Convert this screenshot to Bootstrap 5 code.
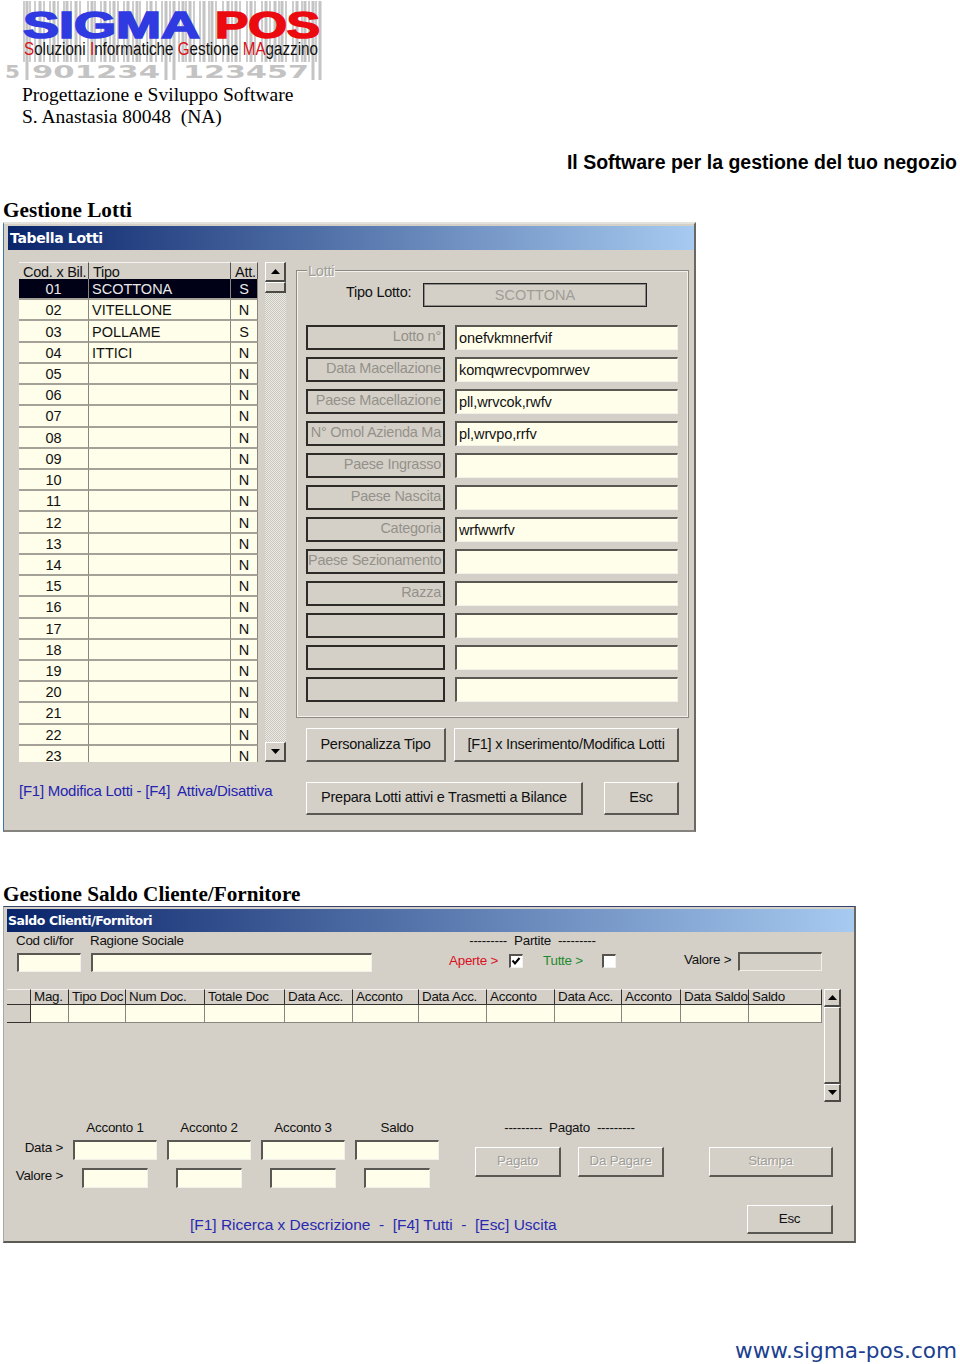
<!DOCTYPE html>
<html lang="it">
<head>
    <meta charset="UTF-8">
    <title>Sigma POS - Gestione Lotti</title>
    <link href="https://cdn.jsdelivr.net/npm/bootstrap@5.3.0/dist/css/bootstrap.min.css" rel="stylesheet">
    <style>
        /* Page */
        body {
            margin: 0;
            background: #fff;
            color: #000;
            font-family: "Liberation Sans", Arial, sans-serif;
            overflow: hidden;
        }
        .sheet { width: 960px; height: 1364px; overflow: hidden; }
        .logo-box { display: block; width: 330px; height: 84px; }
        .address {
            padding-left: 22px;
            font: 19.5px/22px "Liberation Serif", serif;
        }
        .slogan {
            margin-top: 22px;
            height: 24px;
            padding-right: 3px;
            font-size: 19.5px;
            line-height: 24px;
            font-weight: 700;
            text-align: right;
        }
        .heading-doc {
            margin: 24px 0 0 3px;
            height: 24px;
            font: 700 21.2px/24px "Liberation Serif", serif;
        }
        .heading-two { margin-top: 50px; }
        .site-link {
            margin-top: 95px;
            padding-right: 3px;
            height: 26px;
            font: 21.6px/26px "DejaVu Sans", sans-serif;
            color: #1b408f;
            text-align: right;
        }

        /* Windows */
        .win {
            background: #d4d0c8;
            font-size: 14.5px;
            line-height: 16px;
            letter-spacing: -.25px;
            color: #111;
        }
        .win-lots {
            margin-left: 3px;
            width: 693px;
            height: 610px;
            border-top: 2px solid #e4e2dc;
            border-left: 1px solid #3f77a8;
            border-right: 2px solid #6a6862;
            border-bottom: 2px solid #85837d;
        }
        .win-saldo {
            margin-left: 3px;
            width: 853px;
            height: 337px;
            border-top: 1px solid #33416f;
            border-left: 1px solid #a9a7a0;
            border-right: 2px solid #6a6862;
            border-bottom: 2px solid #5c5a55;
            font-size: 13.4px;
        }
        .win-title {
            background: linear-gradient(90deg, #0a246a, #a6caf0);
            color: #fff;
            font: 700 14px/24px "DejaVu Sans", sans-serif;
            letter-spacing: -.35px;
            white-space: nowrap;
        }
        .win-lots .win-title { margin: 2px 0 0 4px; height: 24px; padding-left: 2px; }
        .win-saldo .win-title { margin: 2px 0 0 3px; height: 23px; padding-left: 1px; font-size: 12.5px; letter-spacing: -.45px; line-height: 23px; }

        .win-btn {
            display: block;
            padding: 0;
            background: #d4d0c8;
            border-style: solid;
            border-width: 1px 2px 2px 1px;
            border-color: #fff #5a5852 #5a5852 #fff;
            border-radius: 0;
            color: #111;
            font-size: 14.5px;
            letter-spacing: -.25px;
            text-align: center;
        }
        .win-saldo .win-btn { font-size: 13.4px; }
        .win-btn:disabled {
            opacity: 1;
            background: #d4d0c8;
            border-color: #fff #5a5852 #5a5852 #fff;
            color: #a09d96;
            text-shadow: 1px 1px 0 #fff;
        }
        .win-input {
            display: block;
            min-height: 0;
            padding: 0 2px;
            background: #fffeea;
            border-style: solid;
            border-width: 2px 1px 1px 2px;
            border-color: #5a5852 #f2f0ea #f2f0ea #5a5852;
            border-radius: 0;
            color: #111;
            font-size: 14.5px;
            line-height: 16px;
            letter-spacing: -.1px;
        }
        .win-input:disabled { background: #d4d0c8; }

        /* Scrollbars */
        .scroll-bar { display: flex; flex-direction: column; flex: none; }
        .scroll-btn {
            flex: none;
            display: flex;
            align-items: center;
            justify-content: center;
            background: #d4d0c8;
            border-style: solid;
            border-width: 1px 2px 2px 1px;
            border-color: #fff #4c4a45 #4c4a45 #fff;
        }
        .scroll-btn svg { width: 9px; height: 5px; fill: #000; }
        .scroll-track {
            flex: 1;
            background: repeating-conic-gradient(#eceae5 0 25%, #c9c6bd 0 50%) 0 0 / 2px 2px;
        }
        .lots-scroll { width: 21px; height: 500px; }
        .lots-scroll .scroll-btn { height: 20px; }
        .lots-scroll .scroll-thumb { height: 11px; flex: none; }
        .saldo-scroll { width: 17px; height: 113px; margin-left: 2px; }
        .saldo-scroll .scroll-btn { height: 18px; }
        .saldo-scroll .scroll-fill { flex: 1; }

        /* Lot list */
        .lots-body { padding: 12px 0 0 15px; }
        .lots-left { width: 267px; flex: none; margin-right: 10px; }
        .lots-grid-wrap { width: 239px; height: 500px; overflow: hidden; background: #fffeea; }
        .lots-grid {
            width: 239px;
            table-layout: fixed;
            border-collapse: separate;
            border-spacing: 0;
        }
        .lots-grid th {
            height: 17px;
            padding: 1px 0 0 4px;
            background: #d4d0c8;
            font-weight: 400;
            line-height: 14px;
            white-space: nowrap;
            overflow: hidden;
            border-right: 1px solid #55534e;
            border-top: 1px solid #f4f2ee;
        }
        .lots-grid td {
            height: 21.23px;
            padding: 1px 0 0;
            background: #fffeea;
            font-size: 14.5px;
            line-height: 18px;
            letter-spacing: 0;
            text-align: center;
            border-right: 1px solid #88867f;
            border-bottom: 2px solid #a3a198;
            overflow: hidden;
        }
        .lots-grid td.cell-type { text-align: left; padding-left: 3px; }
        .lots-grid tr.picked td { background: #000016; color: #e9e9e9; }
        .col-code { width: 70px; }
        .col-type { width: 142px; }
        .lots-hint {
            margin: 20px 0 0 0;
            color: #2424b0;
            font-size: 15px;
            line-height: 18px;
            white-space: nowrap;
        }

        /* Lotti group */
        .lots-right { width: 393px; flex: none; }
        .lots-group {
            position: relative;
            margin-top: 8px;
            height: 448px;
            padding: 12px 0 0 9px;
            border: 1px solid #8b8982;
            outline: 1px solid #f3f1ec;
            outline-offset: -2px;
        }
        .group-legend {
            position: absolute;
            top: -8px;
            left: 10px;
            padding: 0 1px;
            background: #d4d0c8;
            color: #a09d96;
            text-shadow: 1px 1px 0 #fff;
        }
        .type-row { height: 24px; margin-bottom: 18px; }
        .type-label { width: 77px; margin-left: 40px; line-height: 18px; }
        .type-value {
            width: 224px;
            height: 24px;
            border: 1px solid #222;
            outline: 1px solid #8d8b85;
            outline-offset: -2px;
            color: #a09d96;
            text-align: center;
            line-height: 22px;
            letter-spacing: 0;
        }
        .field-row { height: 25px; margin-bottom: 7px; }
        .field-tag {
            width: 139px;
            height: 25px;
            margin-right: 10px;
            padding-right: 2px;
            border: 2px solid #2c2b28;
            color: #94918a;
            text-align: right;
            line-height: 19px;
            white-space: nowrap;
            overflow: hidden;
        }
        .field-row .win-input { width: 223px; height: 25px; }
        .lots-actions { padding-left: 10px; }
        .lots-actions .win-btn { flex: none; }
        .act-one { margin-top: 10px; }
        .act-two { margin-top: 20px; }
        .btn-custom { width: 140px; height: 34px; margin-right: 8px; }
        .btn-edit { width: 225px; height: 34px; }
        .btn-send { width: 277px; height: 33px; margin-right: 21px; }
        .btn-esc-a { width: 75px; height: 33px; }

        /* Saldo window */
        .saldo-body { padding: 2px 0 0 3px; }
        .saldo-top { height: 38px; }
        .top-code { width: 64px; margin-left: 10px; margin-right: 10px; flex: none; }
        .top-name { width: 281px; flex: none; }
        .top-label { height: 14px; line-height: 14px; margin-bottom: 5px; text-indent: -1px; white-space: nowrap; }
        .top-code .win-input, .top-name .win-input { height: 19px; }
        .top-partite { width: 167px; margin-left: 77px; flex: none; }
        .partite-head { height: 14px; line-height: 14px; text-align: center; white-space: nowrap; }
        .partite-row { margin-top: 6px; height: 14px; line-height: 14px; }
        .partite-row span { white-space: nowrap; }
        .txt-red { color: #d8111d; }
        .txt-green { color: #1d8a2c; }
        .fake-check {
            flex: none;
            width: 14px;
            height: 14px;
            background: #fff;
            border-style: solid;
            border-width: 2px 1px 1px 2px;
            border-color: #55534e #f2f0ea #f2f0ea #55534e;
        }
        .fake-check svg { display: block; width: 10px; height: 10px; fill: none; stroke: #000; stroke-width: 2; }
        .check-a { margin-left: 13px; margin-right: 20px; }
        .check-b { margin-left: 20px; }
        .label-open { width: 47px; }
        .label-all { width: 39px; }
        .top-value { margin-left: 68px; flex: none; height: 19px; margin-top: 18px; line-height: 15px; }
        .value-word { width: 54px; white-space: nowrap; }
        .win-input.value-box { width: 84px; height: 19px; }

        .saldo-grid-row { margin-top: 17px; }
        .saldo-grid {
            width: 815px;
            table-layout: fixed;
            border-collapse: separate;
            border-spacing: 0;
            align-self: flex-start;
        }
        .saldo-grid th {
            height: 16px;
            padding: 0 0 0 3px;
            background: #d4d0c8;
            font-weight: 400;
            line-height: 14px;
            white-space: nowrap;
            overflow: hidden;
            border-right: 1px solid #33322e;
            border-bottom: 1px solid #33322e;
            border-top: 1px solid #f4f2ee;
        }
        .saldo-grid td {
            height: 18px;
            padding: 0;
            background: #fffeea;
            border-right: 1px solid #88867f;
            border-bottom: 1px solid #88867f;
        }
        .saldo-grid td.row-head { background: #d4d0c8; border-right-color: #33322e; border-bottom-color: #33322e; }
        .saldo-c1 { width: 24px; }
        .saldo-c2 { width: 38px; }
        .saldo-c3 { width: 57px; }
        .saldo-c4 { width: 79px; }
        .saldo-c5 { width: 80px; }
        .saldo-c6 { width: 68px; }
        .saldo-c7 { width: 66px; }
        .saldo-c10 { width: 67px; }
        .saldo-c11 { width: 59px; }

        .saldo-lower { margin-top: 19px; height: 67px; }
        .acc-table { width: 431px; flex: none; }
        .acc-heads { height: 14px; padding-left: 66px; line-height: 14px; margin-bottom: 5px; }
        .acc-heads div { width: 84px; margin-right: 10px; text-align: center; flex: none; }
        .acc-tag { width: 56px; flex: none; text-align: right; white-space: nowrap; }
        .acc-dates { height: 20px; margin-bottom: 8px; line-height: 15px; }
        .acc-dates .win-input { flex: none; width: 84px; height: 20px; margin-right: 10px; }
        .acc-dates .acc-tag { margin-right: 10px; }
        .acc-vals { height: 20px; line-height: 15px; }
        .acc-vals .win-input { flex: none; width: 66px; height: 20px; margin-right: 28px; }
        .acc-vals .acc-tag { margin-right: 19px; }
        .paid-box { margin-left: 37px; width: 358px; flex: none; }
        .paid-head { width: 189px; height: 14px; margin-bottom: 12px; line-height: 14px; text-align: center; white-space: nowrap; }
        .paid-box .win-btn { height: 30px; flex: none; }
        .btn-paid { width: 86px; margin-right: 17px; }
        .btn-due { width: 86px; margin-right: 45px; }
        .btn-print { width: 124px; }
        .saldo-foot { width: 826px; margin-top: 17px; height: 29px; }
        .saldo-hint {
            padding: 10px 0 0 183px;
            color: #2a2ab0;
            font-size: 15.5px;
            line-height: 20px;
            letter-spacing: -.02px;
            white-space: nowrap;
        }
        .btn-esc-b { width: 86px; height: 29px; flex: none; }
    </style>
</head>
<body>
<div class="sheet">

    <!-- Header -->
    <svg class="logo-box" viewBox="0 0 330 84" role="img" aria-label="Sigma POS">
        <path stroke="#bdbdbd" stroke-width="1.5" fill="none" d="M24 1V62M30 1V62M35 1V62M44 1V62M50 1V62M58 1V62M64 1V62M71 1V62M80 1V62M88 1V62M95 1V62M101 1V62M110 1V62M118 1V62M124 1V62M133 1V62M140 1V62M147 1V62M156 1V62M162 1V62M170 1V62M179 1V62M186 1V62M194 1V62M200 1V62M209 1V62M216 1V62M223 1V62M232 1V62M240 1V62M247 1V62M255 1V62M262 1V62M270 1V62M279 1V62M286 1V62M293 1V62M302 1V62M309 1V62M316 1V62"/>
        <path stroke="#c4c4c4" stroke-width="3" fill="none" d="M27 1V80M40 1V62M54 1V62M67 1V62M76 1V62M92 1V62M105 1V62M114 1V62M128 1V62M137 1V62M151 1V62M166 1V80M174 1V80M183 1V62M190 1V62M204 1V62M212 1V62M228 1V62M236 1V62M251 1V62M266 1V62M275 1V62M282 1V62M297 1V62M305 1V62M313 1V80M320 1V80"/>
        <text x="23" y="38" font-family="Liberation Sans" font-weight="700" font-size="36" textLength="177" lengthAdjust="spacingAndGlyphs" fill="#2f3ae0" stroke="#2f3ae0" stroke-width="1.6">SIGMA</text>
        <text x="215" y="38" font-family="Liberation Sans" font-weight="700" font-size="36" textLength="105" lengthAdjust="spacingAndGlyphs" fill="#ea0a10" stroke="#ea0a10" stroke-width="1.6">POS</text>
        <text x="24" y="54.500" font-family="Liberation Sans" font-size="18" textLength="294" lengthAdjust="spacingAndGlyphs" fill="#111"><tspan fill="#d8141a">S</tspan>oluzioni <tspan fill="#d8141a">I</tspan>nformatiche <tspan fill="#d8141a">G</tspan>estione <tspan fill="#d8141a">MA</tspan>gazzino</text>
        <g font-family="DejaVu Sans" font-weight="700" font-size="17" fill="#c3c3c3">
            <text x="5" y="78" textLength="15" lengthAdjust="spacingAndGlyphs">5</text>
            <text x="32" y="78" textLength="128" lengthAdjust="spacingAndGlyphs">901234</text>
            <text x="183" y="78" textLength="126" lengthAdjust="spacingAndGlyphs">123457</text>
        </g>
    </svg>
    <div class="address">Progettazione e Sviluppo Software<br>S. Anastasia 80048&nbsp; (NA)</div>
    <div class="slogan">Il Software per la gestione del tuo negozio</div>

    <div class="heading-doc">Gestione Lotti</div>

    <!-- Tabella Lotti -->
    <div class="win win-lots">
        <div class="win-title">Tabella Lotti</div>
        <div class="lots-body d-flex">
            <div class="lots-left">
                <div class="d-flex justify-content-between">
                    <div class="lots-grid-wrap">
                        <table class="lots-grid">
                            <colgroup><col class="col-code"><col class="col-type"><col></colgroup>
                            <thead><tr><th>Cod. x Bil.</th><th>Tipo</th><th>Att.</th></tr></thead>
                            <tbody>
                                <tr class="picked"><td>01</td><td class="cell-type">SCOTTONA</td><td>S</td></tr>
                                <tr><td>02</td><td class="cell-type">VITELLONE</td><td>N</td></tr>
                                <tr><td>03</td><td class="cell-type">POLLAME</td><td>S</td></tr>
                                <tr><td>04</td><td class="cell-type">ITTICI</td><td>N</td></tr>
                                <tr><td>05</td><td></td><td>N</td></tr>
                                <tr><td>06</td><td></td><td>N</td></tr>
                                <tr><td>07</td><td></td><td>N</td></tr>
                                <tr><td>08</td><td></td><td>N</td></tr>
                                <tr><td>09</td><td></td><td>N</td></tr>
                                <tr><td>10</td><td></td><td>N</td></tr>
                                <tr><td>11</td><td></td><td>N</td></tr>
                                <tr><td>12</td><td></td><td>N</td></tr>
                                <tr><td>13</td><td></td><td>N</td></tr>
                                <tr><td>14</td><td></td><td>N</td></tr>
                                <tr><td>15</td><td></td><td>N</td></tr>
                                <tr><td>16</td><td></td><td>N</td></tr>
                                <tr><td>17</td><td></td><td>N</td></tr>
                                <tr><td>18</td><td></td><td>N</td></tr>
                                <tr><td>19</td><td></td><td>N</td></tr>
                                <tr><td>20</td><td></td><td>N</td></tr>
                                <tr><td>21</td><td></td><td>N</td></tr>
                                <tr><td>22</td><td></td><td>N</td></tr>
                                <tr><td>23</td><td></td><td>N</td></tr>
                            </tbody>
                        </table>
                    </div>
                    <div class="scroll-bar lots-scroll">
                        <div class="scroll-btn"><svg viewBox="0 0 9 5"><polygon points="4.500,0 9,5 0,5"/></svg></div>
                        <div class="scroll-btn scroll-thumb"></div>
                        <div class="scroll-track"></div>
                        <div class="scroll-btn"><svg viewBox="0 0 9 5"><polygon points="0,0 9,0 4.500,5"/></svg></div>
                    </div>
                </div>
                <div class="lots-hint">[F1] Modifica Lotti - [F4]&nbsp; Attiva/Disattiva</div>
            </div>

            <div class="lots-right">
                <div class="lots-group">
                    <span class="group-legend">Lotti</span>
                    <div class="type-row d-flex">
                        <div class="type-label">Tipo Lotto:</div>
                        <div class="type-value">SCOTTONA</div>
                    </div>
                    <div class="field-row d-flex"><div class="field-tag">Lotto n°</div><input class="form-control win-input" value="onefvkmnerfvif"></div>
                    <div class="field-row d-flex"><div class="field-tag">Data Macellazione</div><input class="form-control win-input" value="komqwrecvpomrwev"></div>
                    <div class="field-row d-flex"><div class="field-tag">Paese Macellazione</div><input class="form-control win-input" value="pll,wrvcok,rwfv"></div>
                    <div class="field-row d-flex"><div class="field-tag">N° Omol Azienda Ma</div><input class="form-control win-input" value="pl,wrvpo,rrfv"></div>
                    <div class="field-row d-flex"><div class="field-tag">Paese Ingrasso</div><input class="form-control win-input"></div>
                    <div class="field-row d-flex"><div class="field-tag">Paese Nascita</div><input class="form-control win-input"></div>
                    <div class="field-row d-flex"><div class="field-tag">Categoria</div><input class="form-control win-input" value="wrfwwrfv"></div>
                    <div class="field-row d-flex"><div class="field-tag">Paese Sezionamento</div><input class="form-control win-input"></div>
                    <div class="field-row d-flex"><div class="field-tag">Razza</div><input class="form-control win-input"></div>
                    <div class="field-row d-flex"><div class="field-tag"></div><input class="form-control win-input"></div>
                    <div class="field-row d-flex"><div class="field-tag"></div><input class="form-control win-input"></div>
                    <div class="field-row d-flex"><div class="field-tag"></div><input class="form-control win-input"></div>
                </div>
                <div class="lots-actions">
                    <div class="act-one d-flex">
                        <button class="btn win-btn btn-custom">Personalizza Tipo</button>
                        <button class="btn win-btn btn-edit">[F1] x Inserimento/Modifica Lotti</button>
                    </div>
                    <div class="act-two d-flex">
                        <button class="btn win-btn btn-send">Prepara Lotti attivi e Trasmetti a Bilance</button>
                        <button class="btn win-btn btn-esc-a">Esc</button>
                    </div>
                </div>
            </div>
        </div>
    </div>

    <div class="heading-doc heading-two">Gestione Saldo Cliente/Fornitore</div>

    <!-- Saldo Clienti/Fornitori -->
    <div class="win win-saldo">
        <div class="win-title">Saldo Clienti/Fornitori</div>
        <div class="saldo-body">
            <div class="saldo-top d-flex">
                <div class="top-code">
                    <div class="top-label">Cod cli/for</div>
                    <input class="form-control win-input">
                </div>
                <div class="top-name">
                    <div class="top-label">Ragione Sociale</div>
                    <input class="form-control win-input">
                </div>
                <div class="top-partite">
                    <div class="partite-head">--------- &nbsp;Partite&nbsp; ---------</div>
                    <div class="partite-row d-flex align-items-center">
                        <span class="txt-red label-open">Aperte &gt;</span>
                        <span class="fake-check check-a"><svg viewBox="0 0 10 10"><path d="M1.500 4.500 4 7.500 8.500 2"/></svg></span>
                        <span class="txt-green label-all">Tutte &gt;</span>
                        <span class="fake-check check-b"></span>
                    </div>
                </div>
                <div class="top-value d-flex">
                    <span class="value-word">Valore &gt;</span>
                    <input class="form-control win-input value-box" disabled>
                </div>
            </div>

            <div class="saldo-grid-row d-flex">
                <table class="saldo-grid">
                    <colgroup>
                        <col class="saldo-c1"><col class="saldo-c2"><col class="saldo-c3"><col class="saldo-c4">
                        <col class="saldo-c5"><col class="saldo-c6"><col class="saldo-c7"><col class="saldo-c6">
                        <col class="saldo-c6"><col class="saldo-c10"><col class="saldo-c11"><col class="saldo-c6"><col>
                    </colgroup>
                    <thead>
                        <tr>
                            <th></th><th>Mag.</th><th>Tipo Doc</th><th>Num Doc.</th><th>Totale Doc</th><th>Data Acc.</th><th>Acconto</th>
                            <th>Data Acc.</th><th>Acconto</th><th>Data Acc.</th><th>Acconto</th><th>Data Saldo</th><th>Saldo</th>
                        </tr>
                    </thead>
                    <tbody>
                        <tr><td class="row-head"></td><td></td><td></td><td></td><td></td><td></td><td></td><td></td><td></td><td></td><td></td><td></td><td></td></tr>
                    </tbody>
                </table>
                <div class="scroll-bar saldo-scroll">
                    <div class="scroll-btn"><svg viewBox="0 0 9 5"><polygon points="4.500,0 9,5 0,5"/></svg></div>
                    <div class="scroll-btn scroll-fill"></div>
                    <div class="scroll-btn"><svg viewBox="0 0 9 5"><polygon points="0,0 9,0 4.500,5"/></svg></div>
                </div>
            </div>

            <div class="saldo-lower d-flex">
                <div class="acc-table">
                    <div class="acc-heads d-flex"><div>Acconto 1</div><div>Acconto 2</div><div>Acconto 3</div><div>Saldo</div></div>
                    <div class="acc-dates d-flex">
                        <span class="acc-tag">Data &gt;</span>
                        <input class="form-control win-input"><input class="form-control win-input"><input class="form-control win-input"><input class="form-control win-input">
                    </div>
                    <div class="acc-vals d-flex">
                        <span class="acc-tag">Valore &gt;</span>
                        <input class="form-control win-input"><input class="form-control win-input"><input class="form-control win-input"><input class="form-control win-input">
                    </div>
                </div>
                <div class="paid-box">
                    <div class="paid-head">--------- &nbsp;Pagato&nbsp; ---------</div>
                    <div class="d-flex">
                        <button class="btn win-btn btn-paid" disabled>Pagato</button>
                        <button class="btn win-btn btn-due" disabled>Da Pagare</button>
                        <button class="btn win-btn btn-print" disabled>Stampa</button>
                    </div>
                </div>
            </div>

            <div class="saldo-foot d-flex justify-content-between">
                <div class="saldo-hint">[F1] Ricerca x Descrizione &nbsp;-&nbsp; [F4] Tutti &nbsp;-&nbsp; [Esc] Uscita</div>
                <button class="btn win-btn btn-esc-b">Esc</button>
            </div>
        </div>
    </div>

    <div class="site-link">www.sigma-pos.com</div>
</div>
<script src="https://cdn.jsdelivr.net/npm/bootstrap@5.3.0/dist/js/bootstrap.bundle.min.js"></script>
</body>
</html>
